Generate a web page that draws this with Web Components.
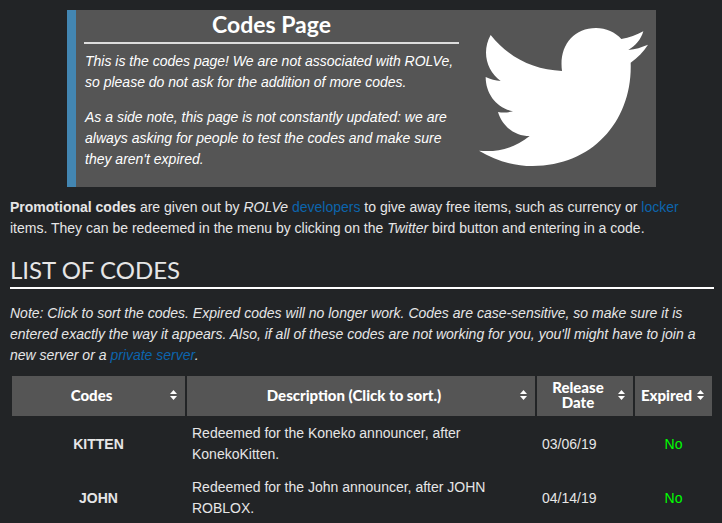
<!DOCTYPE html>
<html lang="en">
  <head>
    <meta charset="UTF-8" />
    <meta name="viewport" content="width=device-width, initial-scale=1.0" />
    <title>Codes</title>
    <style>
      body {
        --heading-font: "Century Gothic", Lato, sans-serif;
        --panel: #555;
        --link: #0c64ad;
        margin: 0;
        padding: 10px 8px 0 10px;
        background: #222426;
        color: #e6e6e6;
        font: 14px/21px "Liberation Sans", Arial, sans-serif;
      }
      p {
        margin: 0 0 12px;
      }
      a {
        color: var(--link);
        text-decoration: none;
      }
      page-notice p {
        margin: 0 0 14px;
      }
    </style>
  </head>

  <body>
    <page-notice>
      <span slot="title">Codes Page</span>
      <p>This is the codes page! We are not associated with ROLVe, so please do not ask for the addition of more codes.</p>
      <p>As a side note, this page is not constantly updated: we are always asking for people to test the codes and make sure they aren't expired.</p>
      <twitter-bird slot="image"></twitter-bird>
    </page-notice>

    <p><b>Promotional codes</b> are given out by <i>ROLVe</i> <a href="#developers">developers</a> to give away free items, such as currency or <a href="#locker">locker</a> items. They can be redeemed in the menu by clicking on the <i>Twitter</i> bird button and entering in a code.</p>

    <section-heading>List of Codes</section-heading>

    <p><i>Note: Click to sort the codes. Expired codes will no longer work. Codes are case-sensitive, so make sure it is entered exactly the way it appears. Also, if all of these codes are not working for you, you'll might have to join a new server or a <a href="#private">private server</a>.</i></p>

    <codes-table></codes-table>

    <template id="notice">
      <style>
        :host {
          display: flex;
          justify-content: space-between;
          margin: 0 58px 10px 57px;
          padding: 0 8px 3px;
          border-left: 9px solid #4386b2;
          background: var(--panel);
          color: #fff;
        }
        .text {
          flex: 1;
          font-style: italic;
        }
        h2 {
          margin: 0 0 7px;
          padding-bottom: 3px;
          border-bottom: 2px solid #ddd;
          font: bold 23px/29px var(--heading-font);
          text-align: center;
        }
        .body {
          padding: 0 1px;
        }
        .image {
          flex: none;
          padding: 18px 0 0 20px;
        }
      </style>
      <div class="text">
        <h2><slot name="title"></slot></h2>
        <div class="body"><slot></slot></div>
      </div>
      <div class="image"><slot name="image"></slot></div>
    </template>

    <template id="bird">
      <style>
        :host {
          display: block;
        }
        svg {
          display: block;
          fill: #fff;
        }
      </style>
      <svg width="169" height="138" viewBox="27 84 507 414" role="img" aria-label="Twitter bird">
        <path d="M62 105C115 172 190 210 276 213C266 140 308 84 378 84C408 84 436 97 454 117C478 113 500 105 520 94C512 120 496 138 475 150C497 148 514 142 534 134C521 155 503 172 482 188C488 360 370 498 188 498C130 498 75 481 27 452C82 458 135 444 179 408C135 408 97 380 84 336C99 339 114 338 129 334C80 324 47 282 47 231C61 238 77 242 92 243C50 213 34 155 62 105Z" />
      </svg>
    </template>

    <template id="heading">
      <style>
        :host {
          display: block;
          margin: 0 0 14px;
        }
        h2 {
          margin: 0;
          padding: 4px 0 2px;
          border-bottom: 2px solid #fff;
          font: 400 24px/30px var(--heading-font);
          text-transform: uppercase;
        }
      </style>
      <h2><slot></slot></h2>
    </template>

    <template id="table">
      <style>
        :host {
          display: block;
        }
        table {
          width: 100%;
          table-layout: fixed;
          border-spacing: 2px;
          margin-top: -4px;
        }
        th,
        td {
          padding: 5px;
        }
        thead th {
          background: var(--panel);
          padding: 0;
        }
        thead .code {
          width: 173px;
        }
        thead .date {
          width: 96px;
        }
        thead .expired {
          width: 77px;
        }
        button {
          display: flex;
          align-items: center;
          width: 100%;
          height: 40px;
          padding: 0 8px 2px 3px;
          border: 0;
          background: none;
          color: #fff;
          font: 900 15px/15px var(--heading-font);
          cursor: pointer;
        }
        button span {
          flex: 1;
        }
        svg {
          flex: none;
          margin-left: 2px;
          fill: #fff;
        }
        tbody .expired {
          color: #0f0;
          text-align: center;
        }
      </style>
      <table>
        <thead>
          <tr></tr>
        </thead>
        <tbody></tbody>
      </table>
    </template>

    <script>
      // shared base: clones the template with the given id
      class TemplateElement extends HTMLElement {
        constructor(id) {
          super();
          const shadow = this.attachShadow({ mode: "open" });
          shadow.appendChild(document.getElementById(id).content.cloneNode(true));
        }
      }

      class PageNotice extends TemplateElement {
        constructor() {
          super("notice");
        }
      }

      class TwitterBird extends TemplateElement {
        constructor() {
          super("bird");
        }
      }

      class SectionHeading extends TemplateElement {
        constructor() {
          super("heading");
        }
      }

      const columns = [
        { key: "code", label: "Codes" },
        { key: "description", label: "Description (Click to sort.)" },
        { key: "date", label: "Release Date" },
        { key: "expired", label: "Expired" },
      ];

      const codes = [
        { code: "KITTEN", description: "Redeemed for the Koneko announcer, after KonekoKitten.", date: "03/06/19", expired: "No" },
        { code: "JOHN", description: "Redeemed for the John announcer, after JOHN ROBLOX.", date: "04/14/19", expired: "No" },
      ];

      class CodesTable extends TemplateElement {
        constructor() {
          super("table");
          this.sortKey = "";
          this.direction = 1;
          this.shadowRoot.querySelector("thead tr").innerHTML = columns
            .map(
              (c) => `<th class="${c.key}" scope="col"><button type="button" data-key="${c.key}"><span>${c.label}</span><svg width="7" height="10" viewBox="0 0 7 10" aria-hidden="true"><path d="M0 4L3.5 0L7 4ZM0 6H7L3.5 10Z"/></svg></button></th>`
            )
            .join("");
          this.shadowRoot.querySelectorAll("button").forEach((btn) => {
            btn.addEventListener("click", () => this.sort(btn.dataset.key));
          });
          this.renderRows(codes);
        }

        sort(key) {
          this.direction = this.sortKey === key ? -this.direction : 1;
          this.sortKey = key;
          this.renderRows([...codes].sort((a, b) => a[key].localeCompare(b[key]) * this.direction));
        }

        renderRows(rows) {
          this.shadowRoot.querySelector("tbody").innerHTML = rows
            .map(
              (r) => `<tr>
                <th class="code" scope="row">${r.code}</th>
                <td>${r.description}</td>
                <td class="date">${r.date}</td>
                <td class="expired">${r.expired}</td>
              </tr>`
            )
            .join("");
        }
      }

      customElements.define("page-notice", PageNotice);
      customElements.define("twitter-bird", TwitterBird);
      customElements.define("section-heading", SectionHeading);
      customElements.define("codes-table", CodesTable);
    </script>
  </body>
</html>
